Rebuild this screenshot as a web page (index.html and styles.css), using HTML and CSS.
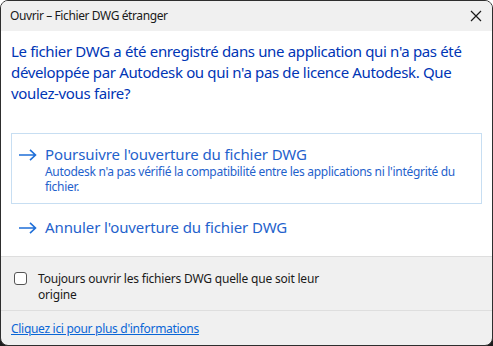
FILE: index.html
```html
<!DOCTYPE html>
<html lang="fr">
<head>
  <meta charset="UTF-8" />
  <title>Ouvrir – Fichier DWG étranger</title>
  <link rel="stylesheet" href="styles.css">
</head>
<body>

  <div class="window">
    <div class="titlebar">
      <span class="title">Ouvrir – Fichier DWG étranger</span>
      <svg class="close" width="12" height="12" viewBox="0 0 12 12">
        <path d="M1 1 L11 11 M11 1 L1 11" stroke="#1a1a1a" stroke-width="1.2" fill="none" />
      </svg>
    </div>

    <div class="content">
      <p class="message">Le fichier DWG a été enregistré dans une application qui n'a pas été développée par Autodesk ou qui n'a pas de licence Autodesk. Que voulez-vous faire?</p>

      <div class="cmd cmd-active">
        <svg class="arrow" width="18" height="12" viewBox="0 0 18 12">
          <path d="M0 6 H16.5 M11 0.8 L16.5 6 L11 11.2" stroke="#1f6fd8" stroke-width="1.6" fill="none" />
        </svg>
        <div class="cmd-text">
          <div class="cmd-title">Poursuivre l'ouverture du fichier DWG</div>
          <div class="cmd-note">Autodesk n'a pas vérifié la compatibilité entre les applications ni l'intégrité du fichier.</div>
        </div>
      </div>

      <div class="cmd">
        <svg class="arrow" width="18" height="12" viewBox="0 0 18 12">
          <path d="M0 6 H16.5 M11 0.8 L16.5 6 L11 11.2" stroke="#1f6fd8" stroke-width="1.6" fill="none" />
        </svg>
        <div class="cmd-text">
          <div class="cmd-title">Annuler l'ouverture du fichier DWG</div>
        </div>
      </div>
    </div>

    <div class="footer">
      <label class="check">
        <span class="box"></span>
        <span class="check-label">Toujours ouvrir les fichiers DWG quelle que soit leur origine</span>
      </label>
    </div>

    <div class="more">
      <a href="#">Cliquez ici pour plus d'informations</a>
    </div>
  </div>

</body>
</html>
```

FILE: styles.css
```css
html, body {
  margin: 0;
  height: 346px;
  background: linear-gradient(#ffffff 50%, #1c1c1c 50%);
}
body {
  font-family: "Noto Sans", "Open Sans", sans-serif;
}
.window {
  width: 493px;
  height: 346px;
  box-sizing: border-box;
  border: 1px solid #2e2e2e;
  border-radius: 8px;
  overflow: hidden;
  display: flex;
  flex-direction: column;
  background-color: #f0f0f0;
}
.titlebar {
  height: 30px;
  background-color: #f0f0f0;
  display: flex;
  align-items: center;
  justify-content: space-between;
  padding: 0 10px 0 9px;
  font-size: 12px;
  letter-spacing: -0.4px;
  color: #1a1a1a;
}
.content {
  background-color: #ffffff;
  padding: 10px 10px 7px 10px;
}
.message {
  margin: 0 0 29px 0;
  font-size: 15px;
  line-height: 21px;
  letter-spacing: -0.35px;
  color: #0035b5;
}
.cmd {
  display: flex;
  align-items: flex-start;
  gap: 8px;
  padding: 10px 8px 9px 7px;
  border: 1px solid transparent;
  margin-bottom: 2px;
}
.cmd-active {
  border-color: #c7def2;
}
.arrow {
  margin-top: 5px;
  flex: none;
}
.cmd-title {
  font-size: 15px;
  line-height: 20px;
  letter-spacing: -0.1px;
  color: #1f62cc;
}
.cmd-note {
  font-size: 12px;
  line-height: 15px;
  letter-spacing: -0.3px;
  color: #1f62cc;
}
.footer {
  border-top: 1px solid #dedede;
  padding: 14px 10px 7px 13px;
  height: 55px;
  box-sizing: border-box;
}
.check {
  display: flex;
  align-items: flex-start;
  gap: 11px;
}
.box {
  width: 11px;
  height: 11px;
  border: 1px solid #555555;
  border-radius: 3px;
  margin-top: 1px;
  flex: none;
  background-color: #ffffff;
}
.check-label {
  font-size: 12px;
  line-height: 16px;
  letter-spacing: -0.2px;
  color: #1a1a1a;
  width: 300px;
}
.more {
  border-top: 1px solid #dedede;
  padding: 10px 10px 8px 10px;
  font-size: 12px;
  line-height: 16px;
  letter-spacing: -0.3px;
}
.more a {
  color: #0a66d6;
}
```
